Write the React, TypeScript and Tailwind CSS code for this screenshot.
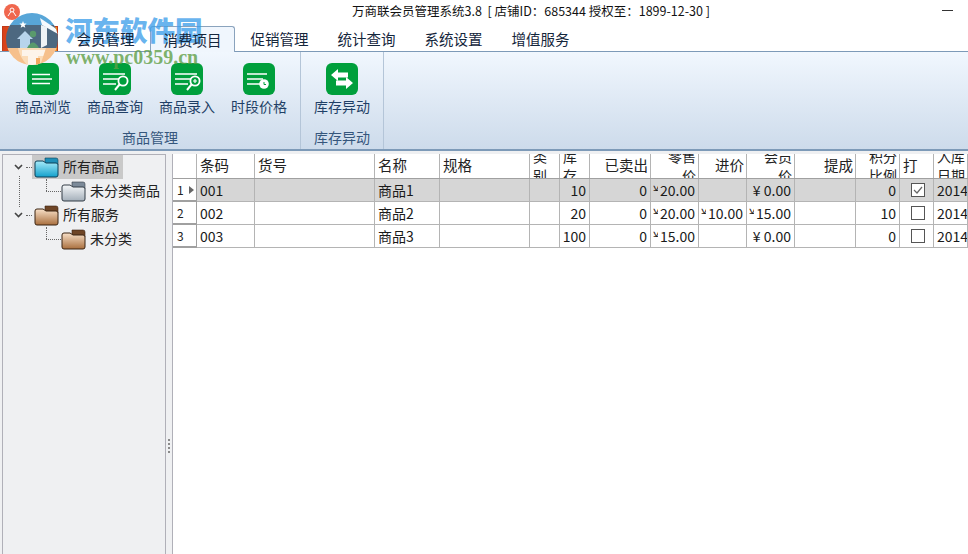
import React from 'react';

const tabs = ['会员管理', '消费项目', '促销管理', '统计查询', '系统设置', '增值服务'];

const rows = [
  { no: '1', code: '001', name: '商品1', stock: '10', sold: '0', price: '20.00', cost: '', member: '0.00', memberFull: true, rate: '0', checked: true, date: '2014' },
  { no: '2', code: '002', name: '商品2', stock: '20', sold: '0', price: '20.00', cost: '10.00', member: '15.00', memberFull: false, rate: '10', checked: false, date: '2014' },
  { no: '3', code: '003', name: '商品3', stock: '100', sold: '0', price: '15.00', cost: '', member: '0.00', memberFull: true, rate: '0', checked: false, date: '2014' },
];

function GreenIcon({ kind }: { kind: string }) {
  return (
    <svg width="32" height="32" viewBox="0 0 32 32" className="shrink-0">
      <rect width="32" height="32" rx="6" fill="#009f3c" />
      {kind === 'swap' ? (
        <g fill="#fff">
          <path d="M5 12 L12 6 V9.5 H22 V14.5 H12 V18 Z" />
          <path d="M27 20 L20 14 V17.5 H10 V22.5 H20 V26 Z" />
        </g>
      ) : kind === 'list' ? (
        <g stroke="#fff" strokeWidth="1.5">
          <path d="M5 11.5 H23 M5 16 H25 M5 20.5 H23" />
        </g>
      ) : (
        <g stroke="#fff" strokeWidth="1.5" fill="none">
          {kind === 'time' ? <path d="M4 11 H24 M4 16 H20 M4 21 H17" /> : <path d="M4 11 H26 M4 16 H22 M4 21 H17" />}
          {kind === 'search' || kind === 'add' ? (
            <>
              <circle cx="24" cy="18" r="4.6" fill="#009f3c" strokeWidth="1.8" />
              <path d="M20.5 21.5 L16 27" strokeWidth="2" />
            </>
          ) : null}
          {kind === 'add' ? <path d="M22 18 H26 M24 16 V20" strokeWidth="1.2" /> : null}
          {kind === 'time' ? (
            <>
              <circle cx="21" cy="21" r="4.8" fill="#fff" stroke="none" />
              <path d="M21 19 V21.5 H23" stroke="#009f3c" strokeWidth="1" />
            </>
          ) : null}
        </g>
      )}
    </svg>
  );
}

function RibbonBtn({ kind, label }: { kind: string; label: string }) {
  return (
    <div className="flex w-[72px] flex-col items-center">
      <GreenIcon kind={kind} />
      <span className="text-[14px] leading-[22px] text-[#1f3f66]">{label}</span>
    </div>
  );
}

function Folder({ tone }: { tone: 'blue' | 'gray' | 'brown' }) {
  const c = {
    blue: ['#1e8fb8', '#a8ecfa', '#12a0cb', '#0b3f56'],
    gray: ['#7c8a99', '#f5f7f9', '#a4afba', '#333c46'],
    brown: ['#6e4526', '#f8e0c8', '#a96f3e', '#3a2412'],
  }[tone];
  const id = `folder-${tone}`;
  return (
    <svg width="25" height="21" viewBox="0 0 25 21" className="shrink-0">
      <defs>
        <linearGradient id={id} x1="0" y1="0" x2="0" y2="1">
          <stop offset="0" stopColor={c[1]} />
          <stop offset="1" stopColor={c[2]} />
        </linearGradient>
      </defs>
      <path d="M11 1 H22 a2 2 0 0 1 2 2 V8 H11 Z" fill={c[0]} stroke={c[3]} strokeWidth="0.6" />
      <path d="M1 6 a2 2 0 0 1 2 -2 H9 L12 6 H22 a2 2 0 0 1 2 2 V18 a2 2 0 0 1 -2 2 H3 a2 2 0 0 1 -2 -2 Z" fill={`url(#${id})`} stroke={c[3]} strokeWidth="1" />
    </svg>
  );
}

function Chevron() {
  return (
    <svg width="9" height="6" viewBox="0 0 9 6" className="shrink-0">
      <path d="M1 1 L4.5 4.5 L8 1" fill="none" stroke="#444" strokeWidth="1.6" />
    </svg>
  );
}

function TreeItem({ tone, label, depth, selected, chevron }: { tone: 'blue' | 'gray' | 'brown'; label: string; depth: number; selected?: boolean; chevron?: boolean }) {
  return (
    <div className={`relative flex h-6 items-center ${depth ? 'pl-[43px]' : 'pl-[11px]'}`}>
      {depth ? <span className="absolute left-[43px] top-0 h-[12px] border-l border-dotted border-[#666]" /> : null}
      {chevron ? <Chevron /> : <span className="w-[15px] border-b border-dotted border-[#666]" />}
      {chevron ? <span className="ml-[3px] w-[6px] border-b border-dotted border-[#666]" /> : null}
      <div className={`flex h-6 items-center ${chevron ? 'pl-[2px]' : ''} ${selected ? 'bg-[#c9c9c9]' : ''}`}>
        <Folder tone={tone} />
        <span className="mb-[2px] ml-[4px] pr-[4px] text-[14px] text-[#222]">{label}</span>
      </div>
    </div>
  );
}

function Yen({ v, full }: { v: string; full?: boolean }) {
  if (full) {
    return (
      <div className="flex items-center justify-end whitespace-nowrap">
        <span className="inline-block w-[11px]">¥</span>
        <span>{v}</span>
      </div>
    );
  }
  return (
    <div className="flex items-center justify-end whitespace-nowrap">
      <span className="mr-[2px] -mt-[6px] block h-[7px] w-[5px] overflow-hidden text-[12px] leading-[9px]">¥</span>
      <span>{v}</span>
    </div>
  );
}

const cols = 'grid-cols-[24px_58px_120px_65px_90px_30px_30px_61px_48px_48px_48px_61px_44px_34px_34px]';

function Head({ children, right, two }: { children?: React.ReactNode; right?: boolean; two?: boolean }) {
  return (
    <div className={`flex h-6 items-center overflow-hidden border-r border-[#b4b4b4] text-[#222] ${right ? 'justify-end pr-[2px] pl-[1px] text-right' : 'pl-[3px]'} ${two ? 'text-[14px] leading-[19px]' : 'text-[14.5px]'}`}>
      <span className={`block shrink-0 whitespace-pre-line ${two ? '' : 'mb-[2px]'}`}>{children}</span>
    </div>
  );
}

function Cell({ children, right, center }: { children?: React.ReactNode; right?: boolean; center?: boolean }) {
  return (
    <div className={`flex h-[23px] items-center overflow-hidden whitespace-nowrap border-b border-r border-[#b4b4b4] text-[14px] text-[#1a1a1a] ${right ? 'justify-end pr-[3px]' : 'pl-[3px]'} ${center ? 'justify-center pl-0' : ''}`}>
      {children}
    </div>
  );
}

export default function App() {
  return (
    <div className="relative flex h-[554px] w-[968px] flex-col overflow-hidden bg-white font-['Noto_Sans_CJK_SC','Liberation_Sans',sans-serif]">
      {/* title bar */}
      <div className="relative flex h-[26px] shrink-0 items-center justify-center pb-[4px] pl-[94px] text-[12.5px] text-[#111]">
        万商联会员管理系统3.8&nbsp;&nbsp;[ 店铺ID：685344 授权至：1899-12-30 ]
        <span className="absolute left-[942px] top-[10px] h-[1px] w-[11px] bg-[#333]" />
      </div>

      {/* tabs */}
      <div className="flex h-[26px] shrink-0 items-end border-b border-[#7d9ab8] pl-[2px]">
        <div className="h-[25px] w-[56px] border border-b-0 border-[#c03a18] bg-gradient-to-r from-[#d8401a] to-[#f58a14]" />
        <div className="ml-[4px] flex h-full">
          {tabs.map((t, i) => (
            <div
              key={t}
              className={`-mb-[1px] flex h-[26px] items-center justify-center text-[14.5px] text-[#14263c] ${i === 1 ? 'mx-[1px] w-[85px] rounded-t-[3px] border border-b-0 border-[#8aa3bd] bg-[#f0f6fd]' : 'w-[87px]'}`}
            >
              <span className="relative z-10">{t}</span>
            </div>
          ))}
        </div>
      </div>

      {/* ribbon */}
      <div className="flex h-[99px] shrink-0 border-b-2 border-[#7d9ab8] bg-gradient-to-b from-[#f1f7fe] to-[#cddbeb]">
        <div className="flex w-[301px] flex-col items-center border-r border-[#b4c5d8] pl-[7px] pt-[11px]">
          <div className="flex w-full">
            <RibbonBtn kind="list" label="商品浏览" />
            <RibbonBtn kind="search" label="商品查询" />
            <RibbonBtn kind="add" label="商品录入" />
            <RibbonBtn kind="time" label="时段价格" />
          </div>
          <div className="mt-[10px] pr-[7px] text-[14px] leading-[20px] text-[#35567c]">商品管理</div>
        </div>
        <div className="flex w-[83px] flex-col items-center border-r border-[#b4c5d8] pt-[11px]">
          <RibbonBtn kind="swap" label="库存异动" />
          <div className="mt-[10px] text-[14px] leading-[20px] text-[#35567c]">库存异动</div>
        </div>
      </div>

      {/* body */}
      <div className="flex min-h-0 flex-1 bg-[#eff0f2] pl-[2px] pt-[3px]">
        <div className="w-[164px] shrink-0 border-x border-t border-[#b0b0b8] bg-[#eff0f2]">
          <div className="relative">
            <span className="absolute left-[16px] top-[21px] h-[31px] border-l border-dotted border-[#666]" />
            <TreeItem tone="blue" label="所有商品" depth={0} selected chevron />
            <TreeItem tone="gray" label="未分类商品" depth={1} />
            <TreeItem tone="brown" label="所有服务" depth={0} chevron />
            <TreeItem tone="brown" label="未分类" depth={1} />
          </div>
        </div>

        {/* splitter */}
        <div className="flex w-[7px] shrink-0 flex-col items-center border-r border-[#b0b0b8] pt-[285px]">
          <span className="h-[14px] border-l-2 border-dotted border-[#8a8a8a]" />
        </div>

        {/* grid */}
        <div className="min-w-0 flex-1 overflow-hidden bg-white">
          <div className={`grid w-[795px] border-b border-[#a0a0a0] ${cols}`}>
            <Head />
            <Head>条码</Head>
            <Head>货号</Head>
            <Head>名称</Head>
            <Head>规格</Head>
            <Head two>{'类\n别'}</Head>
            <Head two>{'库\n存'}</Head>
            <Head right>已卖出</Head>
            <Head right two>{'零售\n价'}</Head>
            <Head right>进价</Head>
            <Head right two>{'会员\n价'}</Head>
            <Head right>提成</Head>
            <Head right two>{'积分\n比例'}</Head>
            <Head>打</Head>
            <Head two>{'入库\n日期'}</Head>
          </div>
          {rows.map((r, idx) => (
            <div key={r.no} className={`grid w-[795px] ${cols} ${idx === 0 ? 'bg-[#d6d6d6]' : ''}`}>
              <div className="flex h-[23px] items-center border-b-2 border-r border-[#a0a0a0] bg-white pl-[4px] text-[12px] text-[#222]">
                {r.no}
                {idx === 0 ? <span className="ml-[5px] h-0 w-0 border-y-[4px] border-l-[5px] border-y-transparent border-l-[#666]" /> : null}
              </div>
              <Cell>{r.code}</Cell>
              <Cell />
              <Cell>{r.name}</Cell>
              <Cell />
              <Cell />
              <Cell right>{r.stock}</Cell>
              <Cell right>{r.sold}</Cell>
              <Cell right><Yen v={r.price} /></Cell>
              <Cell right>{r.cost ? <Yen v={r.cost} /> : null}</Cell>
              <Cell right><Yen v={r.member} full={r.memberFull} /></Cell>
              <Cell />
              <Cell right>{r.rate}</Cell>
              <Cell center>
                <span className="flex h-[14px] w-[14px] items-center justify-center border border-[#555] bg-white">
                  {r.checked ? (
                    <svg width="12" height="12" viewBox="0 0 12 12">
                      <path d="M2 6 L5 9 L10 3" fill="none" stroke="#666" strokeWidth="1.2" />
                    </svg>
                  ) : null}
                </span>
              </Cell>
              <Cell>{r.date}</Cell>
            </div>
          ))}
        </div>
      </div>

      {/* app icon, top left */}
      <div className="absolute left-[4px] top-[4px] flex h-[16px] w-[16px] items-center justify-center rounded-full bg-[#f0674e]">
        <svg width="10" height="10" viewBox="0 0 10 10">
          <circle cx="5" cy="3" r="2" fill="none" stroke="#fff" />
          <path d="M1 9 L4 4.5 M9 9 L6 4.5" stroke="#fff" />
        </svg>
      </div>

      {/* watermark */}
      <svg width="52" height="54" viewBox="0 0 52 54" className="absolute left-[6px] top-[12px]">
        <defs>
          <clipPath id="wm">
            <circle cx="26" cy="27" r="26" />
          </clipPath>
        </defs>
        <g clipPath="url(#wm)">
          <rect width="52" height="16" fill="#58a6d8" />
          <rect y="13" width="52" height="23" fill="#4d6880" />
          <rect y="36" width="52" height="18" fill="#fbdcb8" />
          <path d="M22 54 V44 H16 V38 H40 V44 H32 V54 Z" fill="#fdf4ea" />
          <path d="M30 54 V46 H34 V54 Z" fill="#f0a860" />
          <path d="M0 36 H12 Q14 46 22 54 H0 Z" fill="#f6c08c" />
          <path d="M40 36 H52 V54 H34 Z" fill="#f6c08c" />
          <path d="M34 6 L52 18 V22 L36 13 Z" fill="#f6fafd" />
          <path d="M35 13 L41 15 V33 L35 36 Z" fill="#eef3f6" />
        </g>
        <path d="M17 9 l1 2.4 2.6 .2 -2 1.6 .7 2.6 -2.3 -1.4 -2.3 1.4 .7 -2.6 -2 -1.6 2.6 -.2 Z" fill="#fff" />
        <path d="M11 27 L19 19 L27 27 H24 V36 H14 V27 Z" fill="#b8d4ec" />
        <circle cx="27" cy="22" r="3.2" fill="#5a9a6c" />
        <path d="M21 36 Q27 25 33 36 Z" fill="#5a9a6c" />
      </svg>
      <div className="absolute left-[65px] top-[11px] text-[27.5px] font-black leading-[36px] text-[#3fa0ea]/80">
        河东软件园
      </div>
      <div className="absolute left-[66px] top-[46px] text-[20px] font-bold leading-[22px] text-[#5f9f45]/80 font-['Liberation_Serif',serif]">
        www.pc0359.cn
      </div>
    </div>
  );
}
